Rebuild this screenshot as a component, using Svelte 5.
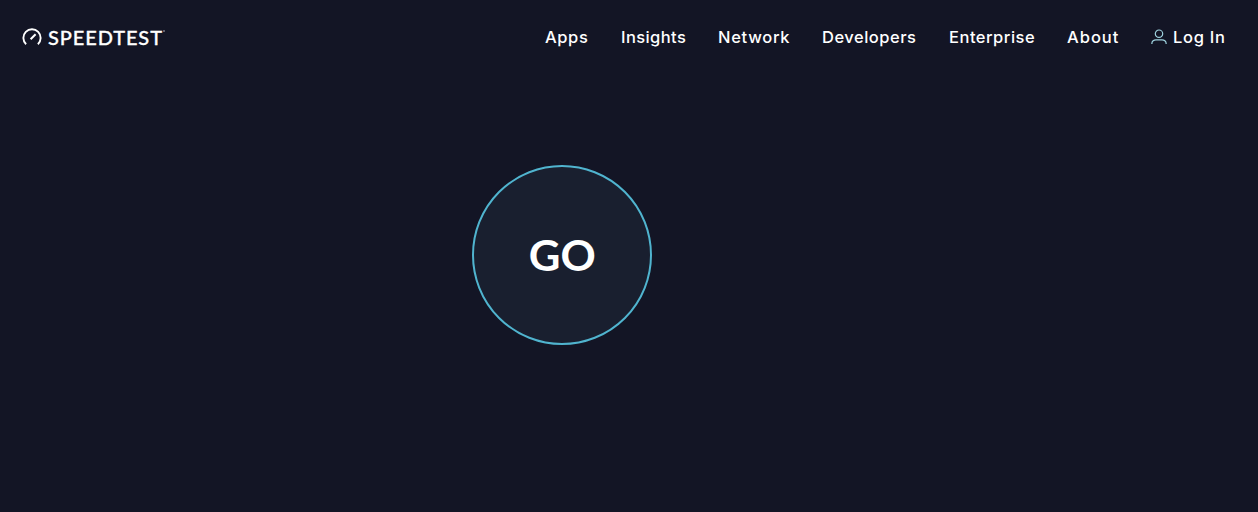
<script lang="ts">
  const links = [
    { label: 'Apps', width: 44, spacing: 0.6 },
    { label: 'Insights', width: 65, spacing: 0.4 },
    { label: 'Network', width: 72, spacing: 0.7 },
    { label: 'Developers', width: 95, spacing: 0.5 },
    { label: 'Enterprise', width: 86, spacing: 0.5 },
    { label: 'About', width: 52, spacing: 1 },
  ];
</script>

<div class="page">
  <header>
    <a class="logo" href="/" aria-label="Speedtest">
      <svg class="gauge" width="20" height="18" viewBox="0 0 20 18" fill="none">
        <path d="M4.1 16.2A8.65 8.65 0 1 1 15.9 16.2" stroke="#fff" stroke-width="1.9" />
        <path d="M8.6 11.2L13.6 6.2" stroke="#fff" stroke-width="2" />
      </svg>
      <span class="wordmark">SPEEDTEST</span>
      <span class="mark"></span>
    </a>

    <nav>
      {#each links as link}
        <a href="/" style="width: {link.width}px; letter-spacing: {link.spacing}px">{link.label}</a>
      {/each}
      <a class="login" href="/">
        <svg width="16" height="16" viewBox="0 0 16 16" fill="none" stroke="#9fd3df" stroke-width="1.2">
          <circle cx="8" cy="4.7" r="3.7" />
          <path d="M0.9 15V14Q1.4 10.8 5 10.8H11Q14.6 10.8 15.1 14V15" />
        </svg>
        <span>Log In</span>
      </a>
    </nav>
  </header>

  <main>
    <button class="go"><span>GO</span></button>
  </main>
</div>

<style>
  :global(body) {
    margin: 0;
    background: #131525;
  }

  .page {
    display: flex;
    flex-direction: column;
    height: 512px;
    overflow: hidden;
    background: #131525;
    color: #fff;
    font-family: Inter, 'Liberation Sans', sans-serif;
  }

  header {
    display: flex;
    align-items: center;
    justify-content: space-between;
    box-sizing: border-box;
    height: 74px;
    padding: 0 33px 0 22px;
  }

  a {
    color: inherit;
    text-decoration: none;
    white-space: nowrap;
  }

  .logo {
    display: flex;
    align-items: center;
    height: 20px;
  }

  .wordmark {
    width: 114px;
    margin-left: 6px;
    font-family: Lato, sans-serif;
    font-size: 20px;
    font-weight: 500;
    line-height: 20px;
    letter-spacing: 0.9px;
    -webkit-text-stroke: 0.3px #fff;
  }

  .mark {
    width: 2px;
    height: 2px;
    margin: 0 0 12px 1px;
    border-radius: 50%;
    background: #777988;
  }

  nav {
    display: flex;
    align-items: center;
    gap: 32px;
    font-size: 16.5px;
    font-weight: 500;
    line-height: 20px;
  }

  .login {
    display: flex;
    align-items: center;
    gap: 6px;
  }

  .login span {
    width: 52px;
    letter-spacing: 0.7px;
  }

  main {
    display: flex;
    flex: 1;
    align-items: flex-start;
    justify-content: center;
    padding: 91px 134px 0 0;
  }

  .go {
    display: flex;
    align-items: center;
    justify-content: center;
    box-sizing: border-box;
    width: 180px;
    height: 180px;
    padding: 0;
    border: 2px solid #50b4cf;
    border-radius: 50%;
    background: #191f2f;
    color: #fff;
    font-family: Lato, sans-serif;
    font-size: 42px;
    font-weight: 700;
    line-height: 50px;
  }

  .go span {
    transform: scaleX(1.04);
  }
</style>
